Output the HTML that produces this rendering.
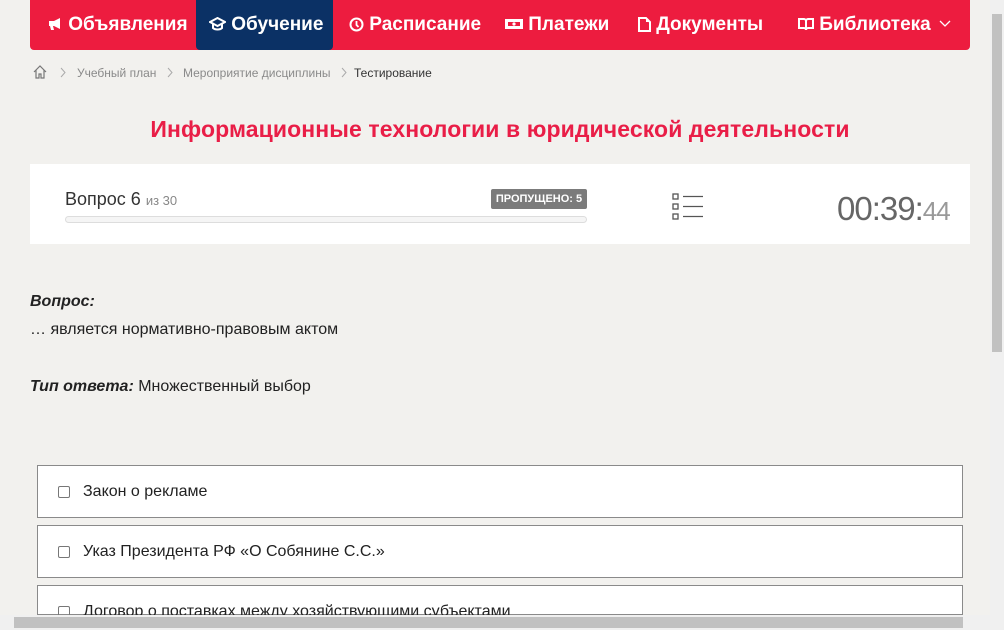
<!DOCTYPE html>
<html style="width:1004px;height:630px;overflow:hidden"><head><meta charset="utf-8"><style>
*{margin:0;padding:0;box-sizing:border-box}
body{width:1004px;height:630px;overflow:hidden;background:#f2f1ee;font-family:"Liberation Sans",sans-serif;position:relative}
.nav{position:absolute;left:30px;top:0;width:940px;height:50px;background:#ed1c3f;border-radius:0 0 4px 4px}
.nav div{position:absolute;top:0;height:50px;line-height:50px;color:#fff;font-size:19px;font-weight:bold;white-space:nowrap}
.act{background:#0b3165;border-radius:0 0 4px 4px}
.ab{position:absolute}
.bc{position:absolute;top:66px;font-size:12px;color:#8a8a8a}
.ans{position:absolute;left:37px;width:926px;height:53px;background:#fff;border:1px solid #8a8a8a}
.ans span{position:absolute;left:45px;top:17px;font-size:16px;color:#222}
.ans i{position:absolute;left:20px;top:20px;width:12px;height:12px;border:1px solid #777;border-radius:2px}
</style></head><body>
<div class="nav">
<div style="left:17px"><svg width="16" height="14" viewBox="0 0 16 14" style="vertical-align:-1px"><path d="M2 4h5l6-3v11l-6-3H6l1 4H4l-1-4H2z" fill="#fff"/></svg> Объявления</div>
<div class="act" style="left:166px;width:137px;padding-left:13px"><svg width="17" height="14" viewBox="0 0 17 14" style="vertical-align:-1px"><path d="M1 5l7.5-4 7.5 4-7.5 4z M4 7v4c2 2 7 2 9 0V7" fill="none" stroke="#fff" stroke-width="2"/></svg> Обучение</div>
<div style="left:319px"><svg width="15" height="15" viewBox="0 0 15 15" style="vertical-align:-2px"><circle cx="7.5" cy="7.5" r="6" fill="none" stroke="#fff" stroke-width="2"/><path d="M7.5 4v4l2 2" stroke="#fff" stroke-width="1.8" fill="none"/></svg> Расписание</div>
<div style="left:475px"><svg width="18" height="12" viewBox="0 0 18 12" style="vertical-align:0"><rect x="0" y="1" width="18" height="10" fill="#fff"/><rect x="3" y="4" width="12" height="4" fill="#ed1c3f"/><circle cx="9" cy="6" r="1.6" fill="#fff"/></svg> Платежи</div>
<div style="left:608px"><svg width="13" height="15" viewBox="0 0 13 15" style="vertical-align:-2px"><path d="M1 1h7l4 4v9H1z" fill="none" stroke="#fff" stroke-width="2"/><path d="M8 1v4h4" fill="#fff"/></svg> Документы</div>
<div style="left:768px"><svg width="16" height="14" viewBox="0 0 16 14" style="vertical-align:-1px"><path d="M1 2h5c1 0 2 1 2 2v9c0-1-1-2-2-2H1zM15 2h-5c-1 0-2 1-2 2v9c0-1 1-2 2-2h5z" fill="none" stroke="#fff" stroke-width="2"/></svg> Библиотека <svg width="12" height="8" viewBox="0 0 12 8" style="vertical-align:2px;margin-left:3px"><path d="M1 1l5 5 5-5" fill="none" stroke="#fff" stroke-width="1.3"/></svg></div>
</div>
<svg class="ab" style="left:33px;top:65px" width="14" height="14" viewBox="0 0 14 14"><path d="M1 7L7 1l6 6M3 5v8h3V9h2v4h3V5" fill="none" stroke="#777" stroke-width="1.2"/></svg>
<svg class="ab" style="left:60px;top:67px" width="6" height="11" viewBox="0 0 6 11"><path d="M1 1l4 4.5L1 10" fill="none" stroke="#aaa"/></svg>
<div class="bc" style="left:77px">Учебный план</div>
<svg class="ab" style="left:167px;top:67px" width="6" height="11" viewBox="0 0 6 11"><path d="M1 1l4 4.5L1 10" fill="none" stroke="#aaa"/></svg>
<div class="bc" style="left:183px">Мероприятие дисциплины</div>
<svg class="ab" style="left:341px;top:67px" width="6" height="11" viewBox="0 0 6 11"><path d="M1 1l4 4.5L1 10" fill="none" stroke="#aaa"/></svg>
<div class="bc" style="left:354px;color:#333">Тестирование</div>
<div class="ab" style="left:0;width:1000px;top:116px;text-align:center;font-size:23px;font-weight:bold;color:#e91e47;letter-spacing:0.1px">Информационные технологии в юридической деятельности</div>
<div class="ab" style="left:30px;top:164px;width:940px;height:80px;background:#fff">
<div class="ab" style="left:35px;top:25px;font-size:18px;color:#333">Вопрос 6 <span style="font-size:13px;color:#888">из 30</span></div>
<div class="ab" style="left:461px;top:25px;width:96px;height:20px;background:#7b7b7b;border-radius:2px;color:#fff;font-size:11px;font-weight:bold;text-align:center;line-height:20px">ПРОПУЩЕНО: 5</div>
<div class="ab" style="left:35px;top:52px;width:522px;height:7px;border:1px solid #ddd;border-radius:4px;background:#f5f5f5"></div>
<svg class="ab" style="left:642px;top:29px" width="32" height="27" viewBox="0 0 32 27"><g fill="none" stroke="#555" stroke-width="1.3"><rect x="1" y="1" width="5" height="5"/><rect x="1" y="11" width="5" height="5"/><rect x="1" y="21" width="5" height="5"/><path d="M11 3.5h20M11 13.5h20M11 23.5h20"/></g></svg>
<div class="ab" style="left:807px;top:26px;font-size:33px;color:#666;letter-spacing:-1px">00:39:<span style="font-size:26px;color:#999">44</span></div>
</div>
<div class="ab" style="left:30px;top:288px;font-size:16px;color:#222;line-height:28px"><b><i>Вопрос:</i></b><br>… является нормативно-правовым актом</div>
<div class="ab" style="left:30px;top:378px;font-size:16px;color:#222"><b><i>Тип ответа:</i></b> Множественный выбор</div>
<div class="ans" style="top:465px"><i></i><span>Закон о рекламе</span></div>
<div class="ans" style="top:525px"><i></i><span>Указ Президента РФ «О Собянине С.С.»</span></div>
<div class="ans" style="top:585px;height:30px"><i></i><span>Договор о поставках между хозяйствующими субъектами</span></div>
<div class="ab" style="left:990px;top:0;width:14px;height:615px;background:#f0f0f0"><div class="ab" style="left:2px;top:14px;width:10px;height:338px;background:#c1c1c1"></div></div>
<div class="ab" style="left:0;top:615px;width:1004px;height:15px;background:#f0f0f0"><div class="ab" style="left:14px;top:2px;width:949px;height:11px;background:#c1c1c1"></div></div>
</body></html>
